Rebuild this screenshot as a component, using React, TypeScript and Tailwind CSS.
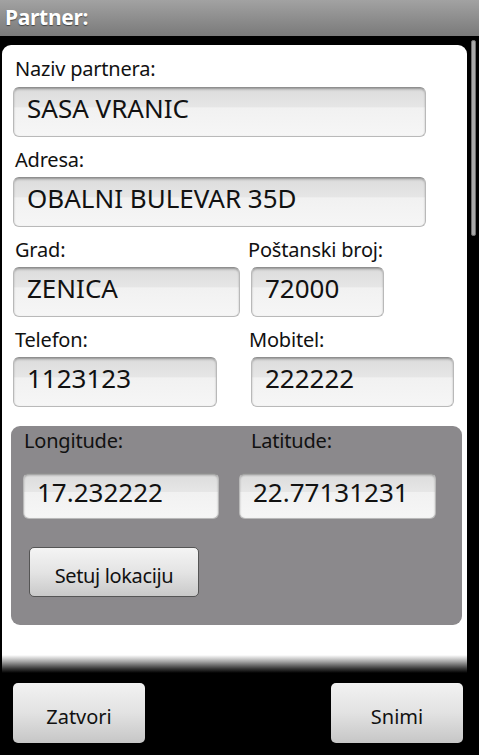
import React from 'react';

const font = { fontFamily: '"Noto Sans", "Open Sans", sans-serif' };

function Field({ value, className }: { value: string; className: string }) {
  return (
    <div
      className={`flex items-center pl-[13px] rounded-[6px] border border-[#b9b9b9] border-t-[#8f8f8f] bg-[linear-gradient(to_bottom,#c9c9c9_0%,#dedede_8%,#e6e6e6_40%,#f1f1f1_41%,#f6f6f6_100%)] shadow-[inset_0_1px_2px_rgba(0,0,0,0.25)] text-[26px] text-[#111] leading-none ${className}`}
    >
      {value}
    </div>
  );
}

function Label({ text, className = '' }: { text: string; className?: string }) {
  return (
    <div className={`h-[24px] leading-[24px] text-[20px] tracking-[-0.2px] text-[#111] ${className}`}>{text}</div>
  );
}

export default function App() {
  return (
    <div className="relative w-[479px] h-[755px] bg-black overflow-hidden flex flex-col" style={font}>
      {/* title bar */}
      <div className="h-[36px] shrink-0 flex items-center pl-[5px] bg-[linear-gradient(to_bottom,#a2a2a2,#8a8a8a_60%,#7a7a7a)]">
        <span className="text-white font-bold text-[21px] tracking-[-0.3px] leading-none [text-shadow:0_1px_1px_rgba(0,0,0,0.5)] -mt-[1px]">
          Partner:
        </span>
      </div>

      {/* scroll indicator */}
      <div className="absolute left-[471px] top-[40px] w-[5px] h-[196px] rounded-[2px] bg-[#a9a9a9] border border-[#6d6d6d]" />

      {/* form card */}
      <div className="mt-[9px] ml-[2px] w-[465px] bg-white rounded-t-[9px] flex flex-col pt-[12px]">
        <div className="pl-[11px] pr-[10px] flex flex-col">
          <Label text="Naziv partnera:" className="ml-[2px]" />
          <Field value="SASA VRANIC" className="mt-[6px] w-[413px] h-[50px] pb-[8px]" />

          <Label text="Adresa:" className="ml-[2px] mt-[11px]" />
          <Field value="OBALNI BULEVAR 35D" className="mt-[5px] w-[413px] h-[50px] pb-[8px]" />

          <div className="flex mt-[11px]">
            <div className="w-[235px] flex flex-col">
              <Label text="Grad:" className="ml-[2px]" />
              <Field value="ZENICA" className="mt-[5px] w-[227px] h-[50px] pb-[8px]" />
            </div>
            <div className="flex flex-col">
              <Label text="Poštanski broj:" />
              <Field value="72000" className="mt-[5px] ml-[3px] w-[133px] h-[50px] pb-[8px]" />
            </div>
          </div>

          <div className="flex mt-[11px]">
            <div className="w-[235px] flex flex-col">
              <Label text="Telefon:" className="ml-[2px]" />
              <Field value="1123123" className="mt-[5px] w-[204px] h-[50px] pb-[8px]" />
            </div>
            <div className="flex flex-col">
              <Label text="Mobitel:" className="ml-[1px]" />
              <Field value="222222" className="mt-[5px] ml-[3px] w-[203px] h-[50px] pb-[8px]" />
            </div>
          </div>
        </div>

        {/* location panel */}
        <div className="mt-[19px] ml-[9px] w-[451px] rounded-[9px] bg-[#8b898c] pt-[3px] pb-[28px] flex flex-col">
          <div className="flex">
            <div className="w-[228px] pl-[13px] flex flex-col">
              <Label text="Longitude:" />
              <Field value="17.232222" className="mt-[20px] -ml-[1px] w-[196px] h-[46px] pb-[8px]" />
            </div>
            <div className="flex flex-col">
              <Label text="Latitude:" className="ml-[12px]" />
              <Field value="22.77131231" className="mt-[20px] w-[197px] h-[46px] pb-[8px]" />
            </div>
          </div>
          <button className="mt-[28px] ml-[18px] w-[170px] h-[50px] rounded-[5px] border border-[#555] bg-[linear-gradient(to_bottom,#f4f4f4,#e4e4e4_50%,#c9c9c9)] text-[20px] tracking-[-0.35px] text-[#111] leading-none pt-[8px]">
            Setuj lokaciju
          </button>
        </div>

        <div className="mt-[30px] h-[18px] bg-[linear-gradient(to_bottom,#ffffff,#a9a9a9_35%,#3a3a3a_75%,#000000)]" />
      </div>

      {/* bottom buttons */}
      <div className="mt-[10px] flex justify-between pl-[13px] pr-[16px]">
        <button className="w-[132px] h-[60px] rounded-[5px] bg-[linear-gradient(to_bottom,#f2f2f2,#e2e2e2_50%,#c6c6c6)] text-[20px] text-[#111] leading-none pt-[8px]">
          Zatvori
        </button>
        <button className="w-[132px] h-[60px] rounded-[5px] bg-[linear-gradient(to_bottom,#f2f2f2,#e2e2e2_50%,#c6c6c6)] text-[20px] text-[#111] leading-none pt-[8px]">
          Snimi
        </button>
      </div>
    </div>
  );
}
